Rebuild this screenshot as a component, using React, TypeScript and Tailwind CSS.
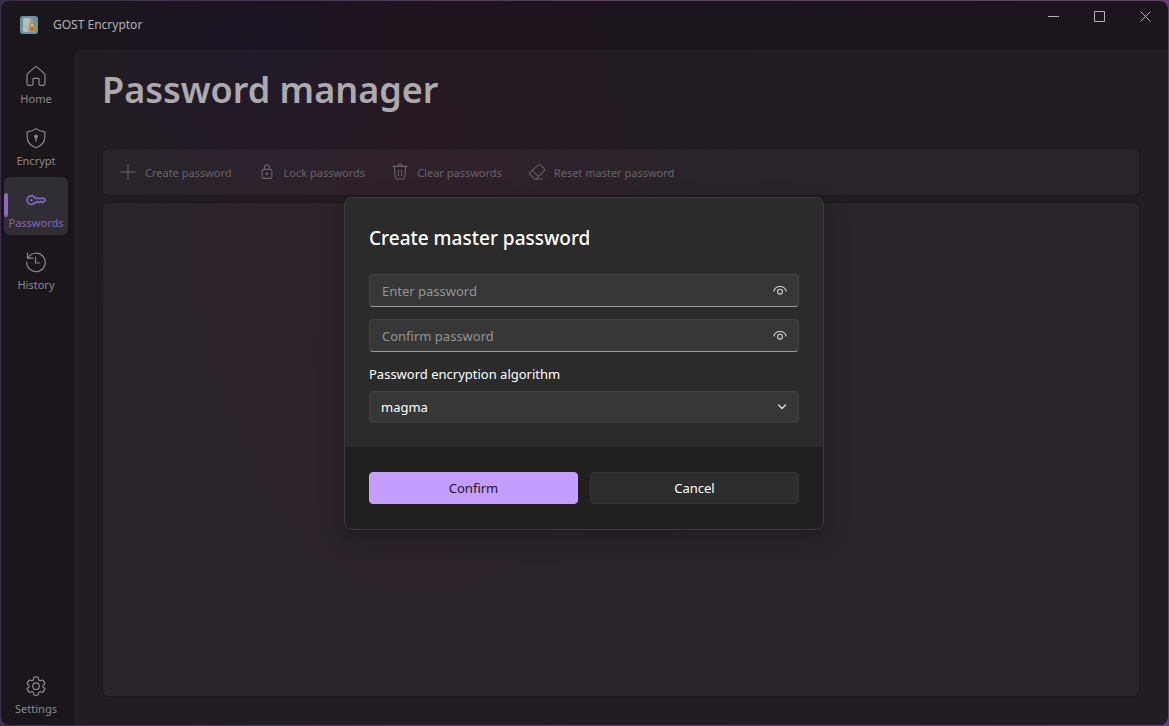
import { useState } from "react";
import type { ReactNode } from "react";

function Icon({ children, size = 24, className = "", stroke = 1.2 }: { children: ReactNode; size?: number; className?: string; stroke?: number }) {
  return (
    <svg
      width={size}
      height={size}
      viewBox="0 0 24 24"
      fill="none"
      stroke="currentColor"
      strokeWidth={stroke}
      strokeLinecap="round"
      strokeLinejoin="round"
      className={className}
      aria-hidden="true"
    >
      {children}
    </svg>
  );
}

const homePath = (
  <path d="M10.9 3.1a1.6 1.6 0 0 1 2.2 0l7.1 6.3c.5.5.8 1.1.8 1.8v8.6c0 .9-.7 1.6-1.6 1.6h-2.8c-.9 0-1.6-.7-1.6-1.6v-4.6c0-.5-.4-.8-.8-.8H9.800c-.5 0-.8.4-.8.8v4.600c0 .9-.7 1.600-1.600 1.600H4.600c-.9 0-1.600-.7-1.600-1.600v-8.600c0-.7.3-1.300.8-1.800z" />
);

const shieldPath = (
  <>
    <path d="M12 2.600c2.300 1.800 5 2.800 8 3 .5 0 .8.300.8.800V11c0 5-2.900 8.600-8.500 10.700a.8.800 0 0 1-.6 0C6.100 19.600 3.200 16 3.200 11V6.400c0-.5.300-.8.800-.8 3-.2 5.700-1.200 8-3z" />
    <circle cx="12" cy="10.500" r="1.300" fill="currentColor" />
    <path d="M12 11v3.800" strokeWidth="1.500" />
  </>
);

const keyPath = (
  <>
    <path d="M11.300 10.300a4.300 4.300 0 1 0-.2 4h1.600l1.200-.9 1.400 1.100 1.500-1.100 1.400 1.100 1.100-.9h.8l1.300-1.400-1.500-1.900z" />
    <circle cx="7.500" cy="12.200" r="1.200" fill="currentColor" stroke="none" />
  </>
);

const historyPath = (
  <>
    <path d="M3.500 3v5.200h5.200" />
    <path d="M3.800 8.200A9.200 9.200 0 1 1 2.800 12" />
    <path d="M11.500 7v6h4.200" />
  </>
);

const settingsPath = (
  <>
    <path d="M9.900 3.300q2.100-.7 4.200 0l.5 2.200c.2.800 1 1.300 1.900 1.100l2.300-.6q1.400 1.600 2.100 3.700l-1.600 1.500c-.6.500-.6 1.400 0 2l1.600 1.500q-.7 2.100-2.100 3.700l-2.300-.6c-.8-.2-1.700.3-1.900 1.100l-.5 2.100q-2.100.6-4.200 0l-.5-2.100c-.2-.8-1.100-1.300-1.900-1.100l-2.300.6q-1.400-1.600-2.100-3.700l1.600-1.500c.6-.6.6-1.500 0-2L3.100 9.700Q3.800 7.600 5.200 6l2.300.6c.9.200 1.700-.3 1.900-1.100z" />
    <circle cx="12" cy="12.200" r="3.300" />
  </>
);

const plusPath = <path d="M12 2.500v19M2.500 12h19" />;

const lockPath = (
  <>
    <rect x="5.500" y="8.500" width="13" height="12" rx="2" />
    <path d="M8.500 8.500V6a3.500 3.500 0 0 1 7 0v2.500" />
    <circle cx="12" cy="14.500" r="1.200" fill="currentColor" />
  </>
);

const trashPath = (
  <path d="M2.500 4.500h19M9 4.300a3 3 0 0 1 6 0M4.500 4.500l1.300 15a2 2 0 0 0 2 1.800h8.400a2 2 0 0 0 2-1.800l1.300-15M10 10v6.500M14 10v6.500" />
);

const eraserPath = (
  <path d="M14 2.600a2 2 0 0 1 2.800 0l4.800 4.800a2 2 0 0 1 0 2.800L11 20.800a2 2 0 0 1-2.800 0l-5.600-5.500a2 2 0 0 1 0-2.800zM6.200 10.400l7.700 7.600M9.700 21.400H19" />
);

const navItems = [
  { label: "Home", icon: homePath },
  { label: "Encrypt", icon: shieldPath },
  { label: "Passwords", icon: keyPath },
  { label: "History", icon: historyPath },
];

const commands = [
  { label: "Create password", icon: plusPath },
  { label: "Lock passwords", icon: lockPath },
  { label: "Clear passwords", icon: trashPath },
  { label: "Reset master password", icon: eraserPath },
];

function NavItem({ label, icon, active }: { label: string; icon: ReactNode; active?: boolean }) {
  return (
    <a
      href={"#" + label.toLowerCase()}
      aria-current={active ? "page" : undefined}
      className={
        active
          ? "relative flex h-[58px] w-16 flex-col items-center rounded-md bg-[#312d34] pt-[11px] text-[#8568b5]"
          : "relative flex h-[58px] w-16 flex-col items-center rounded-md pt-[11px] text-[#8b898c]"
      }
    >
      {active && <span className="absolute top-4 left-0 h-6 w-1 rounded-full bg-[#8b6cbb]" />}
      <Icon stroke={active ? 1.7 : 1.2}>{icon}</Icon>
      <span className="mt-[3px] text-[11px] leading-4">{label}</span>
    </a>
  );
}

function AppLogo() {
  return (
    <svg width="18" height="18" viewBox="0 0 18 18" aria-hidden="true">
      <rect width="18" height="18" rx="3" fill="#6b93a4" />
      <path d="M3 3.500A1.500 1.500 0 0 1 4.500 2H10l4 4v10H4.500A1.500 1.500 0 0 1 3 14.500z" fill="#b9bbbb" />
      <path d="M10 2l4 4h-4z" fill="#90a5ad" />
      <path d="M9.800 10V8.800a2.200 2.200 0 0 1 4.400 0V10" fill="none" stroke="#a3833d" strokeWidth="1.200" />
      <rect x="8.500" y="10" width="7" height="6" rx="1" fill="#b8943d" />
      <path d="M12 12v2" stroke="#604820" strokeWidth="1.200" />
    </svg>
  );
}

function TitleBar() {
  return (
    <header className="flex h-[47px] shrink-0 items-start justify-between">
      <div className="flex h-full items-center gap-[15px] pl-[19px] text-[#b4b2b5]">
        <AppLogo />
        <span className="text-[12px]">GOST Encryptor</span>
      </div>
      <div className="flex text-[#b4b2b5]">
        <button aria-label="Minimize" className="flex h-[30px] w-[46px] items-center justify-center">
          <svg width="11" height="11" viewBox="0 0 11 11" stroke="currentColor"><path d="M0 5.500h11" /></svg>
        </button>
        <button aria-label="Maximize" className="flex h-[30px] w-[46px] items-center justify-center">
          <svg width="11" height="11" viewBox="0 0 11 11" fill="none" stroke="currentColor"><path d="M.5.500h10v10H.5z" /></svg>
        </button>
        <button aria-label="Close" className="flex h-[30px] w-[46px] items-center justify-center">
          <svg width="11" height="11" viewBox="0 0 11 11" stroke="currentColor"><path d="M.5.500l10 10M10.500.500l-10 10" /></svg>
        </button>
      </div>
    </header>
  );
}

function PasswordField({ id, label }: { id: string; label: string }) {
  const [shown, setShown] = useState(false);
  return (
    <div className="flex h-[33px] items-center rounded border border-[#434343] border-b-[#9a9a9a] bg-[#373737]">
      <label htmlFor={id} className="sr-only">{label}</label>
      <input
        id={id}
        type={shown ? "text" : "password"}
        placeholder={label}
        className="min-w-0 flex-1 self-stretch bg-transparent px-3 pt-0.5 text-[13px] leading-6 text-white outline-none placeholder:overflow-visible placeholder:text-[#959595]"
      />
      <button
        type="button"
        aria-label={"Show " + label.toLowerCase()}
        onClick={() => setShown(!shown)}
        className="flex h-full w-9 items-center justify-center text-[#d5d5d5]"
      >
        <svg width="14" height="12" viewBox="0 0 14 12" fill="none" stroke="currentColor" strokeWidth="1.100" strokeLinecap="round">
          <path d="M.9 7C1.700 4.200 4 2.500 7 2.500s5.300 1.700 6.100 4.500" />
          <circle cx="7" cy="7.700" r="2.400" />
        </svg>
      </button>
    </div>
  );
}

function MasterPasswordDialog() {
  return (
    <div className="absolute inset-y-0 right-px left-0 flex items-center justify-center p-4">
      <form
        role="dialog"
        aria-modal="true"
        aria-labelledby="dialog-title"
        onSubmit={(e) => e.preventDefault()}
        className="w-full max-w-[480px] overflow-hidden rounded-lg border border-[#3d3b3d] bg-[#2b2b2b] text-[13px] text-white shadow-[0_8px_24px_rgba(0,0,0,0.25)]"
      >
        <div className="flex flex-col px-6 pt-6 pb-6">
          <h2 id="dialog-title" className="mb-5 text-[19px] leading-8 font-medium">Create master password</h2>
          <div className="flex flex-col gap-3">
            <PasswordField id="password" label="Enter password" />
            <PasswordField id="confirm-password" label="Confirm password" />
          </div>
          <label htmlFor="algorithm" className="mt-3 mb-[7px] leading-5">Password encryption algorithm</label>
          <div className="relative">
            <select
              id="algorithm"
              defaultValue="magma"
              className="block h-8 w-full appearance-none rounded border border-[#414141] bg-[#373737] pt-0.5 pl-[11px] outline-none"
            >
              <option>magma</option>
            </select>
            <svg width="10" height="6" viewBox="0 0 10 6" fill="none" stroke="#e0e0e0" strokeWidth="1.300" strokeLinecap="round" className="pointer-events-none absolute top-[13px] right-3">
              <path d="M1.500 1L5 4.500 8.500 1" />
            </svg>
          </div>
        </div>
        <div className="grid grid-cols-2 gap-3 border-t border-[#1c1c1c] bg-[#202020] px-6 pt-6 pb-[25px]">
          <button type="submit" className="h-8 rounded border border-[#c9a3ff] bg-[#c49dff] pt-0.5 text-[#1b1524]">Confirm</button>
          <button type="button" className="h-8 rounded border border-[#333333] bg-[#2d2d2d] pt-0.5">Cancel</button>
        </div>
      </form>
    </div>
  );
}

export default function App() {
  return (
    <div className="relative flex min-h-screen bg-[linear-gradient(100deg,#3c2a4c,#5a3a66_40%,#6b3d78)] p-px font-['Noto_Sans','Open_Sans',sans-serif]">
      <div className="flex min-w-0 flex-1 flex-col overflow-hidden rounded-lg bg-[#1a161b] bg-[radial-gradient(ellipse_180px_160px_at_250px_50px,#1c1324,transparent),radial-gradient(ellipse_360px_620px_at_420px_180px,#20121c,transparent)]">
        <TitleBar />
        <div className="flex flex-1">
          <nav className="flex w-[72px] shrink-0 flex-col justify-between px-[3px] pt-[5px] pb-1">
            <div className="flex flex-col gap-1">
              {navItems.map((item) => (
                <NavItem key={item.label} {...item} active={item.label === "Passwords"} />
              ))}
            </div>
            <NavItem label="Settings" icon={settingsPath} />
          </nav>
          <main className="flex min-w-0 flex-1 flex-col rounded-tl-lg border-t border-l border-[#181319] bg-white/3 pr-7 pb-7 pl-7">
            <h1 className="mt-[15px] text-[36px] leading-[52px] font-semibold text-[#acaaad]">Password manager</h1>
            <div role="toolbar" className="mt-8 flex h-12 shrink-0 items-center gap-[26px] rounded-md border border-[#1d171e] bg-[#f8e8ff]/4 px-4 text-[11px] text-[#676369]">
              {commands.map((c) => (
                <button key={c.label} className="flex items-center gap-2 whitespace-nowrap">
                  <Icon size={18} stroke={1.4}>{c.icon}</Icon>
                  <span className="pt-0.5">{c.label}</span>
                </button>
              ))}
            </div>
            <section aria-label="Passwords" className="mt-1.5 flex-1 rounded-md border border-[#1d171e] bg-[#f8e8ff]/4" />
          </main>
        </div>
      </div>
      <MasterPasswordDialog />
    </div>
  );
}
